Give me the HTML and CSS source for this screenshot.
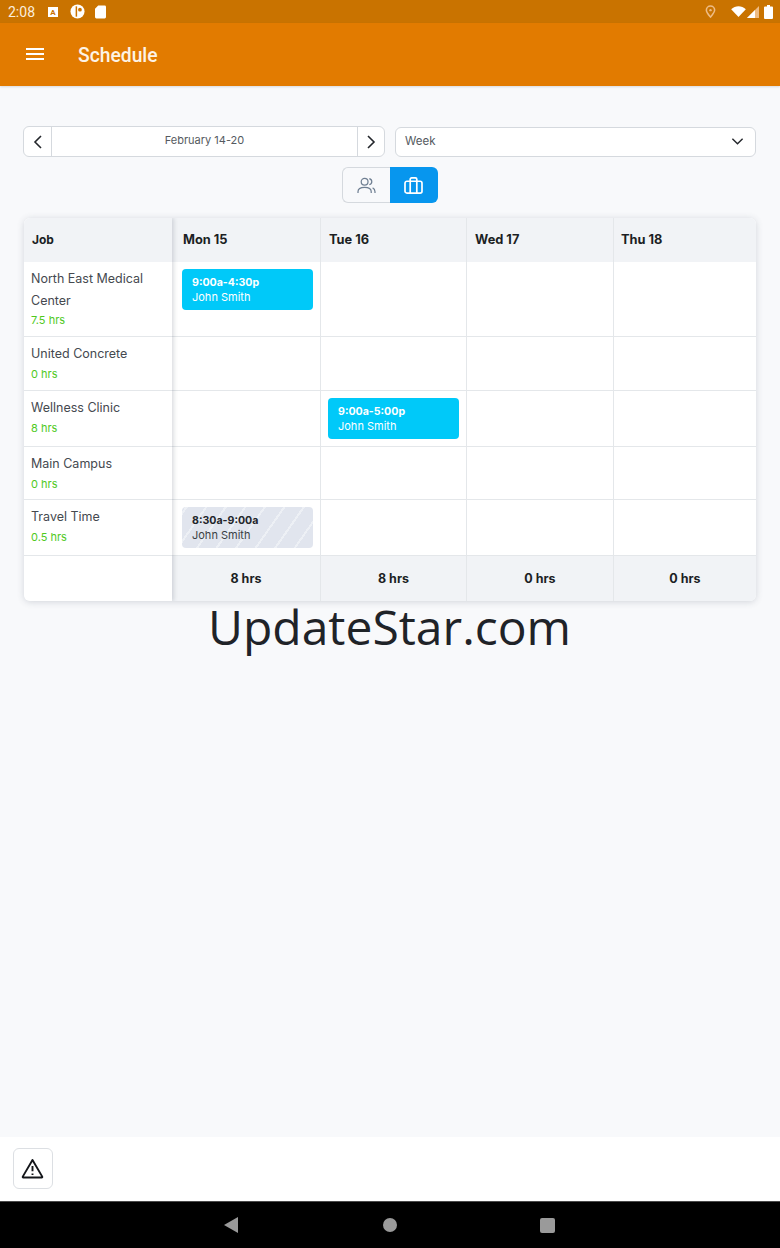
FILE: index.html
```html
<!DOCTYPE html>
<html lang="en">
<head>
  <meta charset="UTF-8" />
  <meta name="viewport" content="width=device-width, initial-scale=1.0" />
  <title>Schedule</title>
  <link rel="stylesheet" href="styles.css">
</head>
<body>
  <div class="app">
    <div class="status-bar">
      <div class="status-left">
        <span class="clock">2:08</span>
        <svg class="st-a" viewBox="0 0 12 12"><path fill="#fff" d="M1 1h10v10H1z"/><text x="6" y="9" class="st-letter">A</text></svg>
        <svg class="st-p" viewBox="0 0 16 16"><circle cx="8" cy="8" r="7.500" fill="#fff"/><path fill="#cb7300" d="M6 2.500h1.600v11H6z"/><circle cx="10.600" cy="6" r="2" fill="#cb7300"/></svg>
        <svg class="st-sd" viewBox="0 0 12 14"><path fill="#fff" d="M3.500 0H10.500a1.500 1.500 0 0 1 1.500 1.500v11a1.500 1.500 0 0 1-1.500 1.500h-9A1.500 1.500 0 0 1 0 12.500V3.500z"/></svg>
      </div>
      <div class="status-right">
        <svg class="st-pin" viewBox="0 0 12 14"><path fill="none" stroke="#eebc85" stroke-width="1.700" d="M6 13C3.500 10 1.500 7.800 1.500 5.500a4.500 4.500 0 0 1 9 0C10.500 7.800 8.500 10 6 13z"/><circle cx="6" cy="5.500" r="1.300" fill="#eebc85"/></svg>
        <svg class="st-wifi" viewBox="0 0 16 12"><path fill="#fff" d="M0 3.500C4.500-.8 11.500-.8 16 3.500L8 12z"/></svg>
        <svg class="st-signal" viewBox="0 0 12 12"><path fill="#eebc85" d="M12 0v12H0z"/><path fill="#fff" d="M8 4v8H0z"/></svg>
        <svg class="st-batt" viewBox="0 0 9 14"><path fill="#fff" d="M3 0h3v1.500h2a1 1 0 0 1 1 1V13a1 1 0 0 1-1 1H1a1 1 0 0 1-1-1V2.500a1 1 0 0 1 1-1h2z"/></svg>
      </div>
    </div>

    <header class="app-bar">
      <div class="burger"><span></span><span></span><span></span></div>
      <h1>Schedule</h1>
    </header>

    <main class="content">
      <div class="controls">
        <div class="date-nav">
          <button class="nav-btn">
            <svg viewBox="0 0 10 16"><path d="M8 2L2 8l6 6"/></svg>
          </button>
          <div class="date-label">February 14-20</div>
          <button class="nav-btn next">
            <svg viewBox="0 0 10 16"><path d="M2 2l6 6-6 6"/></svg>
          </button>
        </div>
        <div class="range-select">
          <span>Week</span>
          <svg viewBox="0 0 14 9"><path d="M1.500 1.500L7 7l5.500-5.500"/></svg>
        </div>
      </div>

      <div class="view-toggle">
        <button class="toggle-btn">
          <svg viewBox="0 0 20 18"><circle cx="8" cy="5" r="3.600"/><path d="M1 17v-1.500C1 12.500 3.500 11 8 11s7 1.500 7 4.500V17"/><path d="M13 1.800c1.700.5 2.600 1.700 2.600 3.200s-.9 2.700-2.600 3.200"/><path d="M16.500 11.500c1.600.7 2.500 2 2.500 4V17"/></svg>
        </button>
        <button class="toggle-btn on">
          <svg viewBox="0 0 20 18"><rect x="1" y="4.500" width="18" height="12.500" rx="2"/><path d="M6.500 4.500V2.500a1.500 1.500 0 0 1 1.500-1.500h4a1.500 1.500 0 0 1 1.500 1.500v2"/><path d="M6.500 4.500V17M13.500 4.500V17"/></svg>
        </button>
      </div>

      <div class="schedule">
        <div class="job-col">
          <div class="job-head">Job</div>
          <div class="job h75"><div class="job-name">North East Medical Center</div><div class="job-hrs">7.5 hrs</div></div>
          <div class="job h54"><div class="job-name">United Concrete</div><div class="job-hrs">0 hrs</div></div>
          <div class="job h56"><div class="job-name">Wellness Clinic</div><div class="job-hrs">8 hrs</div></div>
          <div class="job h53"><div class="job-name">Main Campus</div><div class="job-hrs">0 hrs</div></div>
          <div class="job h56"><div class="job-name">Travel Time</div><div class="job-hrs">0.5 hrs</div></div>
          <div class="job-foot"></div>
        </div>

        <div class="day-col first">
          <div class="day-head">Mon 15</div>
          <div class="slot h75"><div class="shift"><b>9:00a-4:30p</b><span>John Smith</span></div></div>
          <div class="slot h54"></div>
          <div class="slot h56"></div>
          <div class="slot h53"></div>
          <div class="slot h56"><div class="shift travel"><b>8:30a-9:00a</b><span>John Smith</span></div></div>
          <div class="day-foot">8 hrs</div>
        </div>
        <div class="day-col w146">
          <div class="day-head">Tue 16</div>
          <div class="slot h75"></div>
          <div class="slot h54"></div>
          <div class="slot h56"><div class="shift"><b>9:00a-5:00p</b><span>John Smith</span></div></div>
          <div class="slot h53"></div>
          <div class="slot h56"></div>
          <div class="day-foot">8 hrs</div>
        </div>
        <div class="day-col w147">
          <div class="day-head">Wed 17</div>
          <div class="slot h75"></div>
          <div class="slot h54"></div>
          <div class="slot h56"></div>
          <div class="slot h53"></div>
          <div class="slot h56"></div>
          <div class="day-foot">0 hrs</div>
        </div>
        <div class="day-col last">
          <div class="day-head">Thu 18</div>
          <div class="slot h75"></div>
          <div class="slot h54"></div>
          <div class="slot h56"></div>
          <div class="slot h53"></div>
          <div class="slot h56"></div>
          <div class="day-foot">0 hrs</div>
        </div>
      </div>

      <div class="watermark">UpdateStar.com</div>
    </main>

    <div class="bottom-bar">
      <button class="alert-btn">
        <svg viewBox="0 0 24 22"><path d="M12 2L1.800 19.500a.6.6 0 0 0 .5.9h19.400a.6.6 0 0 0 .5-.9z"/><path d="M12 8.500v5.500M12 16.300v1.500"/></svg>
      </button>
    </div>

    <div class="nav-bar">
      <svg class="nav-back" viewBox="0 0 14 16"><path d="M14 0v16L0 8z"/></svg>
      <div class="nav-home"></div>
      <div class="nav-recent"></div>
    </div>
  </div>
</body>
</html>
```

FILE: styles.css
```css
* {
  margin: 0;
  padding: 0;
  box-sizing: border-box;
}
body {
  background: #f8f9fb;
  font-family: Inter, "Liberation Sans", sans-serif;
  color: #33373d;
}
button {
  font: inherit;
  background: none;
  border: none;
}
.app {
  width: 780px;
  height: 1248px;
  display: flex;
  flex-direction: column;
  overflow: hidden;
}

/* android status bar */
.status-bar {
  height: 23px;
  background: #c97300;
  display: flex;
  justify-content: space-between;
  align-items: center;
  padding: 0 7px 0 8px;
  flex-shrink: 0;
}
.status-left, .status-right {
  display: flex;
  align-items: center;
}
.clock {
  font-family: Roboto, sans-serif;
  font-size: 14px;
  color: #fbeedd;
  width: 38px;
}
.st-letter {
  font-family: Roboto, sans-serif;
  font-size: 8px;
  font-weight: 700;
  fill: #c97300;
  text-anchor: middle;
}
.st-a { width: 12px; height: 12px; margin: 0 11px 0 1px; }
.st-p { width: 15px; height: 15px; margin-right: 10px; }
.st-sd { width: 11px; height: 14px; }
.st-pin { width: 11px; height: 13px; margin-right: 15px; }
.st-wifi { width: 15px; height: 11px; margin-right: 1px; }
.st-signal { width: 12px; height: 12px; margin-right: 5px; }
.st-batt { width: 9px; height: 14px; }

/* app bar */
.app-bar {
  height: 63px;
  background: #e27b00;
  display: flex;
  align-items: center;
  padding: 0 26px;
  flex-shrink: 0;
  box-shadow: 0 1px 2px rgba(0,0,0,.12);
}
.burger {
  width: 18px;
  display: flex;
  flex-direction: column;
  gap: 3px;
  margin-right: 34px;
  margin-bottom: 2px;
}
.burger span {
  height: 2px;
  background: #fff;
}
.app-bar h1 {
  font-family: Roboto, sans-serif;
  font-size: 19.300px;
  font-weight: 500;
  color: #fdf3e6;
  padding-top: 1px;
}

/* main area */
.content {
  flex: 1;
  padding: 40px 24px 0 23px;
}
.controls {
  display: flex;
  gap: 10px;
  align-items: center;
}
.date-nav {
  width: 362px;
  height: 31px;
  display: flex;
  background: #fff;
  border: 1px solid #d5d9de;
  border-radius: 6px;
}
.nav-btn {
  width: 27px;
  display: flex;
  align-items: center;
  justify-content: center;
}
.nav-btn.next {
  width: 26px;
}
.nav-btn svg {
  width: 10px;
  height: 16px;
  fill: none;
  stroke: #23262b;
  stroke-width: 1.600;
}
.date-label {
  flex: 1;
  text-align: center;
  font-size: 11px;
  line-height: 26px;
  color: #555a60;
  border-left: 1px solid #d5d9de;
  border-right: 1px solid #d5d9de;
}
.range-select {
  flex: 1;
  height: 30px;
  background: #fff;
  border: 1px solid #d5d9de;
  border-radius: 6px;
  display: flex;
  align-items: center;
  justify-content: space-between;
  padding: 0 11px 1px 9px;
  font-size: 11.500px;
  color: #555a60;
}
.range-select svg {
  width: 13px;
  height: 9px;
  fill: none;
  stroke: #23262b;
  stroke-width: 1.500;
  margin-top: 1px;
}
.view-toggle {
  display: flex;
  width: 96px;
  height: 36px;
  margin: 10px auto 15px;
}
.toggle-btn {
  flex: 1;
  display: flex;
  align-items: center;
  justify-content: center;
  background: #f8f9fb;
  border: 1px solid #d5d9de;
  border-right: none;
  border-radius: 6px 0 0 6px;
}
.toggle-btn svg {
  width: 19px;
  height: 17px;
  fill: none;
  stroke: #6f7f92;
  stroke-width: 1.300;
}
.toggle-btn.on {
  background: #0796ee;
  border: none;
  border-radius: 0 6px 6px 0;
}
.toggle-btn.on svg {
  stroke: #fff;
  stroke-width: 1.800;
}

/* schedule table */
.schedule {
  display: flex;
  width: 732px;
  margin-left: 1px;
  border-radius: 6px;
  overflow: hidden;
  background: #fff;
  box-shadow: 0 1px 7px rgba(60,70,90,.2);
}
.h75 { height: 75px; }
.h54 { height: 54px; }
.h56 { height: 56px; }
.h53 { height: 53px; }
.job-col {
  width: 148px;
  flex-shrink: 0;
  position: relative;
  z-index: 1;
  background: #fff;
  box-shadow: 2px 0 4px rgba(60,70,90,.18);
}
.job-head, .day-head {
  height: 44px;
  background: #f1f3f6;
  font-size: 12px;
  font-weight: 700;
  line-height: 44px;
  color: #1c1f24;
}
.job-head { padding-left: 8px; }
.job {
  padding: 6px 0 0 7px;
  border-bottom: 1px solid #e4e7ea;
}
.job-name {
  font-size: 12.500px;
  line-height: 21.500px;
  color: #45494f;
}
.job-hrs {
  font-size: 11px;
  line-height: 19px;
  color: #4fc91e;
}
.job-foot {
  height: 45px;
}
.day-col {
  flex-shrink: 0;
  border-right: 1px solid #e4e7ea;
}
.day-col.first { width: 149px; }
.w146 { width: 146px; }
.w147 { width: 147px; }
.day-col.last {
  flex: 1;
  border-right: none;
}
.day-head {
  padding-left: 8px;
  font-size: 12.800px;
}
.first .day-head { padding-left: 11px; }
.last .day-head { padding-left: 7px; }
.slot {
  padding: 7px 0 0 7px;
  border-bottom: 1px solid #e4e7ea;
}
.first .slot { padding-left: 10px; }
.shift {
  width: 131px;
  height: 41px;
  background: #00c9f9;
  border-radius: 4px;
  padding: 6px 10px;
  display: flex;
  flex-direction: column;
  color: #fff;
  font-size: 11px;
  line-height: 15px;
}
.shift b {
  font-size: 10.600px;
  font-weight: 700;
}
.shift.travel {
  color: #3b3f45;
  background: repeating-linear-gradient(-55deg, #e1e5ee 0 14px, #edf0f5 14px 16px);
}
.shift.travel b { color: #23262b; }
.day-foot {
  height: 45px;
  background: #f1f3f6;
  text-align: center;
  font-size: 12.500px;
  font-weight: 700;
  line-height: 45px;
  color: #1c1f24;
}
.watermark {
  font-family: "Open Sans", sans-serif;
  font-size: 48px;
  line-height: 52px;
  text-align: center;
  color: #1f2328;
}

/* bottom */
.bottom-bar {
  height: 64px;
  background: #fff;
  padding: 11px 13px;
  flex-shrink: 0;
}
.alert-btn {
  width: 40px;
  height: 41px;
  border: 1px solid #dcdfe3;
  border-radius: 6px;
  display: flex;
  align-items: center;
  justify-content: center;
}
.alert-btn svg {
  width: 23px;
  height: 21px;
  margin-right: 2px;
  fill: none;
  stroke: #14161a;
  stroke-width: 2;
  stroke-linejoin: round;
}
.nav-bar {
  height: 47px;
  background: #000;
  border-top: 1px solid #4a4a4a;
  flex-shrink: 0;
  display: flex;
  align-items: center;
  padding-left: 224px;
}
.nav-back {
  width: 14px;
  height: 16px;
  fill: #9a9a9a;
  margin-right: 145px;
}
.nav-home {
  width: 14px;
  height: 14px;
  border-radius: 50%;
  background: #9a9a9a;
  margin-right: 143px;
}
.nav-recent {
  width: 15px;
  height: 15px;
  border-radius: 2px;
  background: #9a9a9a;
}
```
